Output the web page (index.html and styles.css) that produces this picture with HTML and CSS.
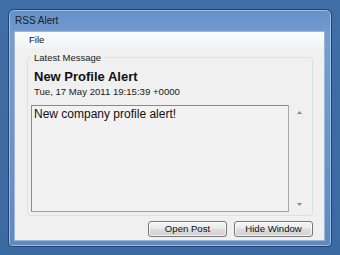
FILE: index.html
```html
<!DOCTYPE html>
<html>
<head>
<meta charset="utf-8">
<link rel="stylesheet" href="styles.css">
</head>
<body>
<div class="window">
  <div class="titlebar">RSS Alert</div>
  <div class="client">
    <div class="menubar"><span class="menu-item">File</span></div>
    <fieldset class="group">
      <legend class="legend">Latest Message</legend>
      <div class="heading">New Profile Alert</div>
      <div class="date">Tue, 17 May 2011 19:15:39 +0000</div>
      <div class="msg-row">
        <div class="message">New company profile alert!</div>
        <div class="scrollbar">
          <svg class="arrow" width="5" height="3" viewBox="0 0 5 3"><path d="M0 3 L2.5 0 L5 3 Z" fill="#8a8a8a"/></svg>
          <svg class="arrow" width="5" height="3" viewBox="0 0 5 3"><path d="M0 0 L2.5 3 L5 0 Z" fill="#8a8a8a"/></svg>
        </div>
      </div>
    </fieldset>
    <div class="buttons">
      <button class="btn">Open Post</button>
      <button class="btn">Hide Window</button>
    </div>
  </div>
</div>
</body>
</html>
```
FILE: styles.css
```css
html, body {
  margin: 0;
  padding: 0;
}
body {
  width: 340px;
  height: 255px;
  background: linear-gradient(180deg, #3f6ea7 0%, #3b69a1 100%);
  font-family: "Liberation Sans", Arial, sans-serif;
  overflow: hidden;
  padding: 9px 0 0 8px;
  box-sizing: border-box;
}
.window {
  width: 324px;
  height: 238px;
  box-sizing: border-box;
  border: 1px solid #24446e;
  border-radius: 6px 6px 4px 4px;
  background: linear-gradient(180deg, #6690c7 0%, #769dd0 12%, #6c93c8 60%, #5f89c1 100%);
  box-shadow: inset 0 0 0 1px rgba(195, 218, 246, 0.6);
  padding: 0 6px 5px 5px;
  display: flex;
  flex-direction: column;
}
.titlebar {
  height: 21px;
  line-height: 21px;
  font-size: 10px;
  color: #151d28;
  padding-left: 1px;
  flex: none;
}
.client {
  flex: 1;
  box-sizing: border-box;
  border: 1px solid #9fb5d4;
  background: #f0f0f0;
  display: flex;
  flex-direction: column;
}
.menubar {
  height: 16px;
  background: linear-gradient(180deg, #fbfbfc 0%, #f3f4f6 100%);
  font-size: 9.5px;
  line-height: 16px;
  padding-left: 14px;
  color: #111;
  flex: none;
}
.menu-item {
  display: inline-block;
}
.group {
  margin: 4px 11px 0 12px;
  padding: 0 3px 3px 3px;
  border: 1px solid #d9e0e6;
  border-radius: 3px;
  min-inline-size: 0;
}
.legend {
  padding: 0 3px;
  font-size: 9.5px;
  line-height: 11px;
  color: #1a1a1a;
}
.heading {
  margin-top: 6px;
  padding-left: 3px;
  font-size: 13px;
  font-weight: bold;
  line-height: 15px;
  color: #111;
}
.date {
  margin-top: 2px;
  padding-left: 3px;
  font-size: 9.6px;
  line-height: 12px;
  color: #1a1a1a;
}
.msg-row {
  margin-top: 7px;
  display: flex;
  height: 107px;
}
.message {
  flex: 1;
  box-sizing: border-box;
  border: 1px solid #8a8a8a;
  border-right-color: #a8a8a8;
  border-bottom-color: #a0a0a0;
  background: #f2f2f2;
  font-size: 12px;
  line-height: 14px;
  padding: 1px 2px;
  color: #111;
}
.scrollbar {
  width: 20px;
  display: flex;
  flex-direction: column;
  justify-content: space-between;
  align-items: center;
  padding: 6px 0 6px;
  box-sizing: border-box;
}
.arrow {
  display: block;
}
.buttons {
  display: flex;
  justify-content: flex-end;
  gap: 7px;
  margin: 5px 11px 0 0;
}
.btn {
  width: 79px;
  height: 16px;
  box-sizing: border-box;
  border: 1px solid #777;
  border-radius: 3px;
  background: linear-gradient(180deg, #f4f4f4 0%, #ebebeb 45%, #dddddd 50%, #d2d2d2 100%);
  box-shadow: inset 0 0 0 1px rgba(255, 255, 255, 0.7);
  font-family: "Liberation Sans", Arial, sans-serif;
  font-size: 9.6px;
  line-height: 14px;
  padding: 0;
  color: #111;
}
```
